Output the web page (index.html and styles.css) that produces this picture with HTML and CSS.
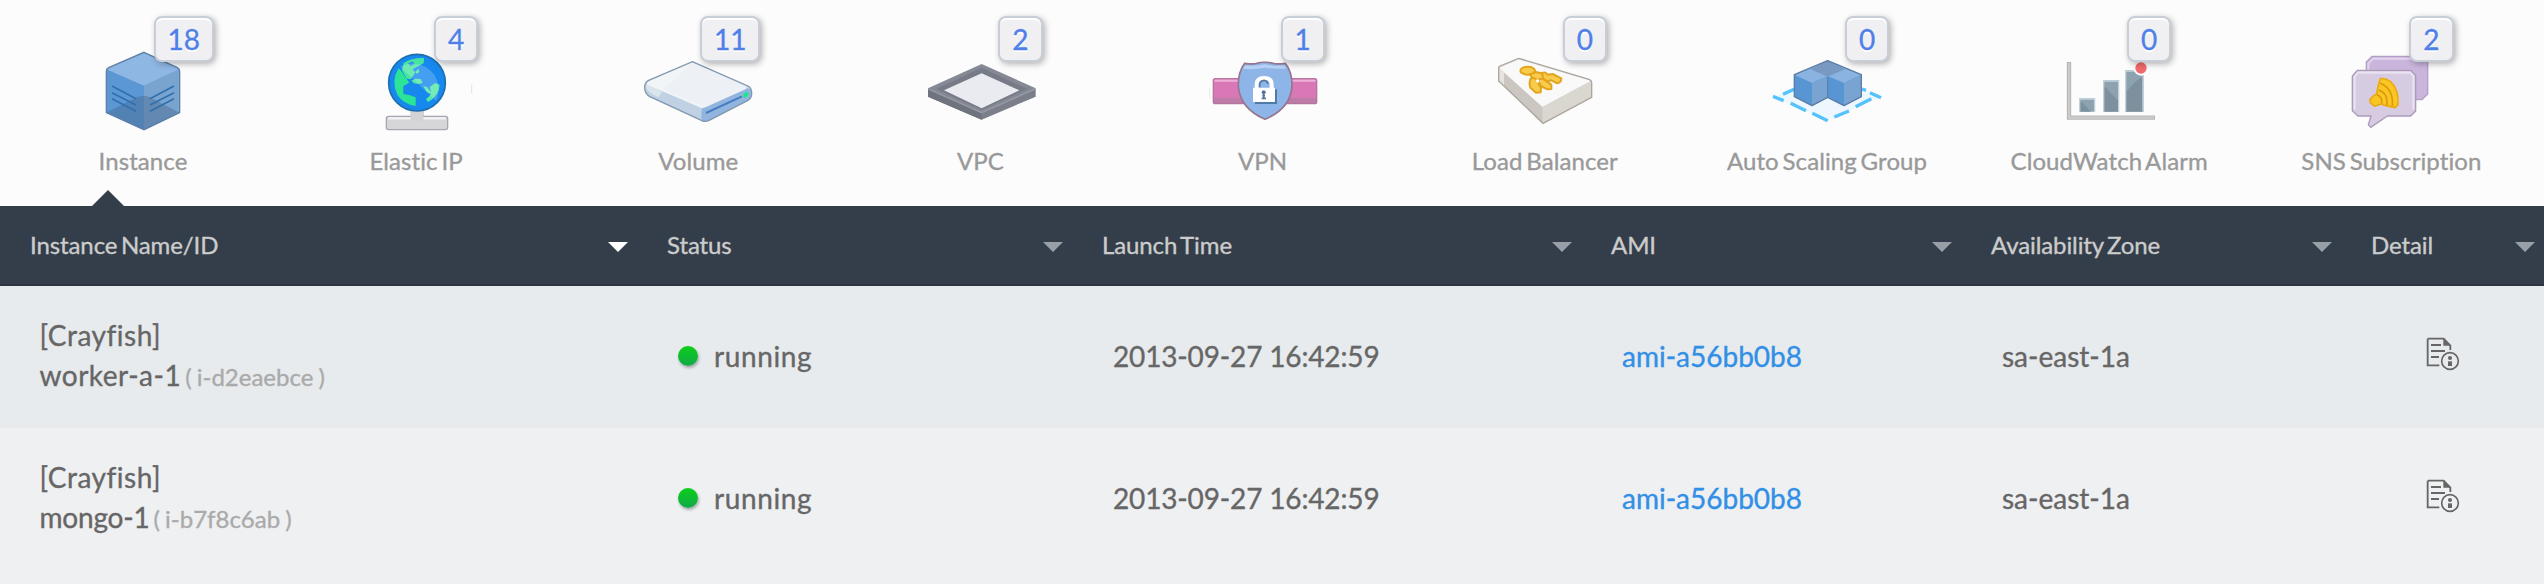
FILE: index.html
```html
<!DOCTYPE html>
<html lang="en">
<head>
<meta charset="utf-8">
<title>Resources</title>
<link rel="stylesheet" href="styles.css">
</head>
<body>
<nav class="tabs">
  <a class="tab tab-first active">
    <svg class="icon" viewBox="9 132 420 270">
      <path d="M222 157L329 208V338L222 389L109 338V208Z" fill="#5b97d3"/>
      <path d="M222 157L329 208L222 257L109 208Z" fill="#8fb7e3"/>
      <path d="M222 257L329 208V338L222 389Z" fill="#7aa4d0"/>
      <path d="M109 338L200 292Q222 284 240 292L329 338L222 389Z" fill="#48678f" opacity=".45"/>
      <path d="M126 258L198 296M126 278L198 315M126 296L198 334M312 258L240 296M312 278L240 315M312 296L240 334" stroke="#2f70ad" stroke-width="5" fill="none"/>
      <path d="M222 157L322 203Q329 207 329 214V338L222 389L109 338V214Q109 207 116 203Z" fill="none" stroke="#5d7fa8" stroke-width="4"/>
    </svg>
    <span class="badge">18</span>
    <span class="label">Instance</span>
  </a>
  <a class="tab">
    <svg class="icon" viewBox="828 132 420 270">
      <path d="M1021 330H1062V362H1021Z" fill="#d3d3d7"/>
      <rect x="949" y="349" width="184" height="40" rx="7" fill="#d6d6d8" stroke="#a5a9b6" stroke-width="4"/>
      <path d="M955 355H1127" stroke="#f4f4f5" stroke-width="7"/>
      <path d="M1022 338H1060V362H1022Z" fill="#d3d3d7"/>
      <circle cx="1041" cy="248" r="85" fill="#1788ee"/>
      <path d="M986 205Q992 210 1002 226L1018 248L1000 258L1000 282L1020 286L1037 292V318Q1000 312 982 284Q962 244 986 205Z" fill="#2be496"/>
      <path d="M1001 189Q1026 173 1062 174L1061 190L1040 201L1028 208L1036 218L1022 238L1010 236L996 211Z" fill="#46e59f"/>
      <path d="M1014 190L1028 184L1034 192L1022 199Z" fill="#338fea"/>
      <path d="M1024 242L1036 236L1052 237L1058 248L1046 252L1032 250ZM1036 215L1046 206L1048 216L1040 222ZM1060 258L1072 262L1082 276L1080 260L1095 249L1109 254Q1108 286 1074 306L1068 298L1084 282L1070 276Z" fill="#50e8a3"/>
      <path d="M990 200A78 78 0 0 1 1098 302Z" fill="#fff" opacity=".2"/>
      <circle cx="1041" cy="248" r="85" fill="none" stroke="#1c6fae" stroke-width="5"/>
      <path d="M1205 254V280" stroke="#d5d5d8" stroke-width="2"/>
    </svg>
    <span class="badge">4</span>
    <span class="label">Elastic IP</span>
  </a>
  <a class="tab">
    <svg class="icon" viewBox="84 132 420 270">
      <path d="M277 185L444 258Q456 264 455 282Q455 294 444 301L326 362Q315 367 304 361L148 289Q134 281 134 262Q134 247 146 241Z" fill="#c3d6e7"/>
      <path d="M136 252L304 326V361L148 289Q132 280 136 252Z" fill="#bfd1e2"/>
      <path d="M136 256Q140 278 176 292L186 276L146 250Z" fill="#dae4ec"/>
      <path d="M304 335Q304 323 316 319L440 266Q455 262 455 282Q455 294 444 301L326 362Q304 370 304 350Z" fill="#91b5df"/>
      <path d="M277 187L440 260Q440 266 432 269L316 322Q308 326 300 322L144 255Q137 250 146 242Z" fill="#f2f5f8"/>
      <path d="M277 187L440 260Q438 266 432 269L316 322L190 268Z" fill="#e9eff5" opacity=".6"/>
      <path d="M318 339L426 289" stroke="#477cc2" stroke-width="6"/>
      <path d="M432 282L443 276V287L432 293Z" fill="#16ec83" stroke="#16ec83" stroke-width="3"/>
      <path d="M277 185L444 258Q456 264 455 282Q455 294 444 301L326 362Q315 367 304 361L148 289Q134 281 134 262Q134 247 146 241Z" fill="none" stroke="#8298ae" stroke-width="4"/>
    </svg>
    <span class="badge">11</span>
    <span class="label">Volume</span>
  </a>
  <a class="tab">
    <svg class="icon" viewBox="930 132 420 270">
      <path d="M984 265L1145 338L1307 265V290L1145 359L984 290Z" fill="#7b7f8a"/>
      <path d="M984 265L1145 338V359L984 290Z" fill="#6f737e"/>
      <path d="M1145 192L1307 265L1145 338L984 265Z" fill="#858995"/>
      <path d="M1145 203L1282 267L1145 330L1008 267Z" fill="#777b87"/>
      <path d="M1145 220L1258 271L1145 325L1032 271Z" fill="#e9ebf0"/>
      <path d="M984 267L1145 338L1307 267" fill="none" stroke="#9498a2" stroke-width="4"/>
    </svg>
    <span class="badge">2</span>
    <span class="label">VPC</span>
  </a>
  <a class="tab">
    <svg class="icon" viewBox="96 132 420 270">
      <path d="M146 264V294" stroke="#dfdfe2" stroke-width="2"/>
      <rect x="157" y="236" width="310" height="75" rx="6" fill="#da77b7"/>
      <path d="M157 293H467V305Q467 311 461 311H163Q157 311 157 305Z" fill="#bd7ca7"/>
      <path d="M160 242H464" stroke="#eeb0d8" stroke-width="7"/>
      <rect x="157" y="236" width="310" height="75" rx="6" fill="none" stroke="#b6739e" stroke-width="4"/>
      <path d="M251 190Q270 193 284 191Q302 186 312 187Q324 186 340 191Q354 193 373 190Q394 216 393 260Q388 326 312 358Q238 326 232 260Q231 216 251 190Z" fill="#8eb5e8" stroke="#97758f" stroke-width="5"/>
      <path d="M252 196Q282 200 312 193Q342 200 371 196L376 206Q340 207 312 203Q280 210 246 206Z" fill="#b5d0f2"/>
      <path d="M282 268H348V312H282Z" fill="#4f7ba8"/>
      <path d="M287 266V254Q287 234 309 234Q332 234 332 254V266" fill="none" stroke="#fff" stroke-width="12"/>
      <path d="M296 262V254Q297 242 309 241Q320 242 320 252" fill="none" stroke="#55799f" stroke-width="5"/>
      <rect x="276" y="263" width="66" height="43" rx="2" fill="#fff"/>
      <circle cx="308" cy="277" r="6" fill="#54779b"/>
      <path d="M308 277V297M302 295H315M304 287H312" stroke="#54779b" stroke-width="5"/>
    </svg>
    <span class="badge">1</span>
    <span class="label">VPN</span>
  </a>
  <a class="tab">
    <svg class="icon" viewBox="945 132 420 270">
      <path d="M1076 175L1287 238Q1295 241 1295 248V292L1149 370L1016 243V204Q1016 200 1020 198Z" fill="#dad7d1"/>
      <path d="M1016 205L1147 320V370L1016 243Z" fill="#cbc7c0"/>
      <path d="M1016 205L1032 218V258L1016 243Z" fill="#e7e4df"/>
      <path d="M1076 178L1293 242L1147 320L1018 204Z" fill="#faf9f9"/>
      <g fill="#f8cb4c" stroke="#e2a51c" stroke-width="6" stroke-linejoin="round">
        <path d="M1108 222L1128 216L1150 221L1158 240L1126 246Z"/>
        <ellipse cx="1103" cy="212" rx="22" ry="12"/>
        <path d="M1146 219Q1158 214 1162 224L1178 222L1204 235Q1204 248 1192 250L1174 241L1162 244L1150 236Z"/>
        <path d="M1134 240Q1146 232 1156 242L1174 254L1174 267L1162 268L1142 258Z"/>
        <path d="M1112 236Q1124 230 1130 240L1143 264L1142 277L1128 278L1111 263Q1106 248 1112 236Z"/>
      </g>
      <circle cx="1133" cy="243" r="5" fill="#fff"/>
      <path d="M1076 175L1287 238Q1295 241 1295 248V292L1149 370L1016 243V204Q1016 200 1020 198Z" fill="none" stroke="#aaa69e" stroke-width="4"/>
    </svg>
    <span class="badge">0</span>
    <span class="label">Load Balancer</span>
  </a>
  <a class="tab">
    <svg class="icon" viewBox="171 132 420 270">
      <path d="M222 290L382 218L543 290L382 362Z" fill="#edf7fd"/>
      <path d="M219 289L251 302M249 283L286 266M272 310L318 332M337 340L383 362M403 351L447 333M467 320L514 296M543 293L510 278M486 267L498 271" stroke="#55c2fb" stroke-width="10" fill="none"/>
      <path d="M383 182L484 224V290L432 317L383 292L336 317L283 290V224Z" fill="#5895d3"/>
      <path d="M383 182L484 224L432 249L383 228L336 249L283 224Z" fill="#8ab3e1"/>
      <path d="M383 182L435 208L383 230L332 208Z" fill="#7899c2"/>
      <path d="M336 249L383 229V292L336 317ZM432 249L484 224V290L432 317Z" fill="#79a3d0"/>
      <path d="M383 182L484 224V290L432 317L383 292L336 317L283 290V224Z" fill="none" stroke="#5c7ca6" stroke-width="4" stroke-linejoin="round"/>
      <path d="M383 230V292" stroke="#587cab" stroke-width="3"/>
    </svg>
    <span class="badge">0</span>
    <span class="label">Auto Scaling Group</span>
  </a>
  <a class="tab">
    <svg class="icon" viewBox="1014 132 420 270">
      <path d="M1104 186V353H1362" fill="none" stroke="#b5b5b5" stroke-width="13"/>
      <path d="M1104 189V353H1359" fill="none" stroke="#cbcbcb" stroke-width="7"/>
      <path d="M1135 295H1182V335H1135ZM1207 241H1254V335H1207ZM1273 211H1327V335H1273Z" fill="#8ca2af"/>
      <path d="M1140 304L1170 335H1135V310ZM1212 260L1254 305V335H1207V266ZM1273 278L1302 246L1327 228V335H1273Z" fill="#788d99" opacity=".8"/>
      <path d="M1136 335V297H1181V335M1208 335V243H1253V335M1274 335V213H1326V335" fill="none" stroke="#c3d3dc" stroke-width="4"/>
      <circle cx="1320" cy="205" r="22" fill="#fcfcfc"/>
      <circle cx="1320" cy="204" r="17" fill="#f26a6d"/>
    </svg>
    <span class="badge">0</span>
    <span class="label">CloudWatch Alarm</span>
  </a>
  <a class="tab">
    <svg class="icon" viewBox="513 132 420 270">
      <path d="M666 169H818L833 184V282L816 299H666L649 282V186Z" fill="#cab6dd" stroke="#b39fc4" stroke-width="4"/>
      <path d="M655 212V190L669 176H815" fill="none" stroke="#e1d5eb" stroke-width="6"/>
      <path d="M622 211H783L797 226V333L782 348H712L662 382L655 374L663 348H624L607 332V228Z" fill="#d7cbe2" stroke="#aa9bb9" stroke-width="4" stroke-linejoin="round"/>
      <path d="M614 328V230L625 218H780L790 228V328" fill="none" stroke="#e9e2f0" stroke-width="6"/>
      <path d="M660 299L671 287L680 282L684 260L691 236Q705 233 722 245Q747 268 744 314L735 323L708 317L692 312L674 319L661 308Z" fill="#fbc624" stroke="#e9ab10" stroke-width="5" stroke-linejoin="round"/>
      <path d="M691 250Q731 266 727 318M686 270Q714 279 711 315M681 284Q698 290 695 311" fill="none" stroke="#d99b0a" stroke-width="5"/>
    </svg>
    <span class="badge">2</span>
    <span class="label">SNS Subscription</span>
  </a>
</nav>
<section class="table">
  <div class="row head">
    <div class="th sorted">Instance Name/ID</div>
    <div class="th">Status</div>
    <div class="th">Launch Time</div>
    <div class="th">AMI</div>
    <div class="th">Availability Zone</div>
    <div class="th">Detail</div>
  </div>
  <div class="row odd">
    <div class="td name"><div>[Crayfish]<br>worker-a-1<span class="id">( i-d2eaebce )</span></div></div>
    <div class="td status"><i class="dot"></i>running</div>
    <div class="td date">2013-09-27 16:42:59</div>
    <div class="td link">ami-a56bb0b8</div>
    <div class="td">sa-east-1a</div>
    <div class="td detail">
      <svg class="info" viewBox="78 51 108 108"><path d="M83 56H131L151 77V90M83 56V136H118M93 75H123M93 93H135M93 111H117" fill="none" stroke="#666" stroke-width="5.5"/><path d="M130 55V77H153Z" fill="#666"/><circle cx="150" cy="123" r="25" fill="none" stroke="#666" stroke-width="5"/><circle cx="150" cy="114" r="6" fill="#666"/><path d="M144 124H156V138H144Z" fill="#666"/></svg>
    </div>
  </div>
  <div class="row even">
    <div class="td name"><div>[Crayfish]<br><span class="tight">mongo-1</span><span class="id">( i-b7f8c6ab )</span></div></div>
    <div class="td status"><i class="dot"></i>running</div>
    <div class="td date">2013-09-27 16:42:59</div>
    <div class="td link">ami-a56bb0b8</div>
    <div class="td">sa-east-1a</div>
    <div class="td detail">
      <svg class="info" viewBox="78 51 108 108"><path d="M83 56H131L151 77V90M83 56V136H118M93 75H123M93 93H135M93 111H117" fill="none" stroke="#666" stroke-width="5.5"/><path d="M130 55V77H153Z" fill="#666"/><circle cx="150" cy="123" r="25" fill="none" stroke="#666" stroke-width="5"/><circle cx="150" cy="114" r="6" fill="#666"/><path d="M144 124H156V138H144Z" fill="#666"/></svg>
    </div>
  </div>
</section>
</body>
</html>
```
FILE: styles.css
```css
* { box-sizing: border-box; }
body {
  margin: 0;
  height: 584px;
  overflow: hidden;
  background: #eff0f2;
  color: #666;
  font-family: Lato, "Liberation Sans", sans-serif;
  font-variant-ligatures: none;
  -webkit-text-stroke: .35px currentColor;
}
.tabs {
  display: flex;
  height: 206px;
  padding-left: 11px;
  background: #fcfcfc;
}
.tab {
  position: relative;
  flex: 0 0 282.2px;
  padding-top: 44px;
  text-align: center;
}
.tab-first { flex-basis: 264px; }
.icon { display: block; width: 140px; height: 90px; margin: 0 auto; }
.badge {
  position: absolute;
  top: 16px;
  right: 79px;
  height: 46px;
  min-width: 44px;
  padding: 0 12px;
  border: 2px solid #c8ced8;
  border-radius: 8px;
  background: #f0f0f3;
  box-shadow: 2px 2px 6px rgba(0, 0, 0, .3), inset 0 2px 0 #fff;
  color: #4f80e8;
  font-size: 28px;
  line-height: 43px;
  text-shadow: 0 2px 0 #fff;
}
.tab-first .badge { right: 61px; }
.label {
  display: block;
  margin-top: 12px;
  color: #999;
  font-size: 24px;
  line-height: 30px;
  letter-spacing: .1px;
  word-spacing: -2.5px;
  white-space: nowrap;
}
.active::after {
  content: "";
  position: absolute;
  left: 81px;
  bottom: 0;
  border: 16px solid transparent;
  border-top: 0;
  border-bottom-color: #333e4a;
}
.row {
  display: grid;
  grid-template-columns: 637px 435px 509px 380px 380px 203px;
}
.head {
  height: 80px;
  background: #333e4a;
  border-bottom: 2px solid #2d3640;
}
.th {
  display: flex;
  align-items: center;
  justify-content: space-between;
  padding: 0 9px 2px 30px;
  color: #ccc;
  font-size: 24px;
  letter-spacing: -.1px;
  word-spacing: -2.5px;
}
.th::after {
  content: "";
  margin-top: 5px;
  border: 10px solid transparent;
  border-bottom: 0;
  border-top-color: #999fa6;
}
.sorted::after { border-top-color: #fff; }
.odd, .even { height: 142px; }
.odd { background: #e7ebed; }
.td {
  display: flex;
  align-items: center;
  padding: 0 0 3px 41px;
  font-size: 28px;
  line-height: 40px;
}
.name { padding-left: 39.5px; letter-spacing: .5px; }
.tight { letter-spacing: -.2px; }
.status { letter-spacing: .6px; }
.date { letter-spacing: -.15px; }
.id { margin-left: 4px; color: #aaa; font-size: 24px; letter-spacing: 0; word-spacing: -1px; }
.dot {
  width: 20px;
  height: 20px;
  margin: 1px 16px 0 0;
  border-radius: 50%;
  background: linear-gradient(#0bcf17, #12a84b);
  box-shadow: 1px 2px 3px rgba(0, 0, 0, .3);
}
.link { color: #318fe6; }
.detail { padding-left: 85px; }
.info { width: 36px; height: 36px; margin-bottom: 1px; }
```
